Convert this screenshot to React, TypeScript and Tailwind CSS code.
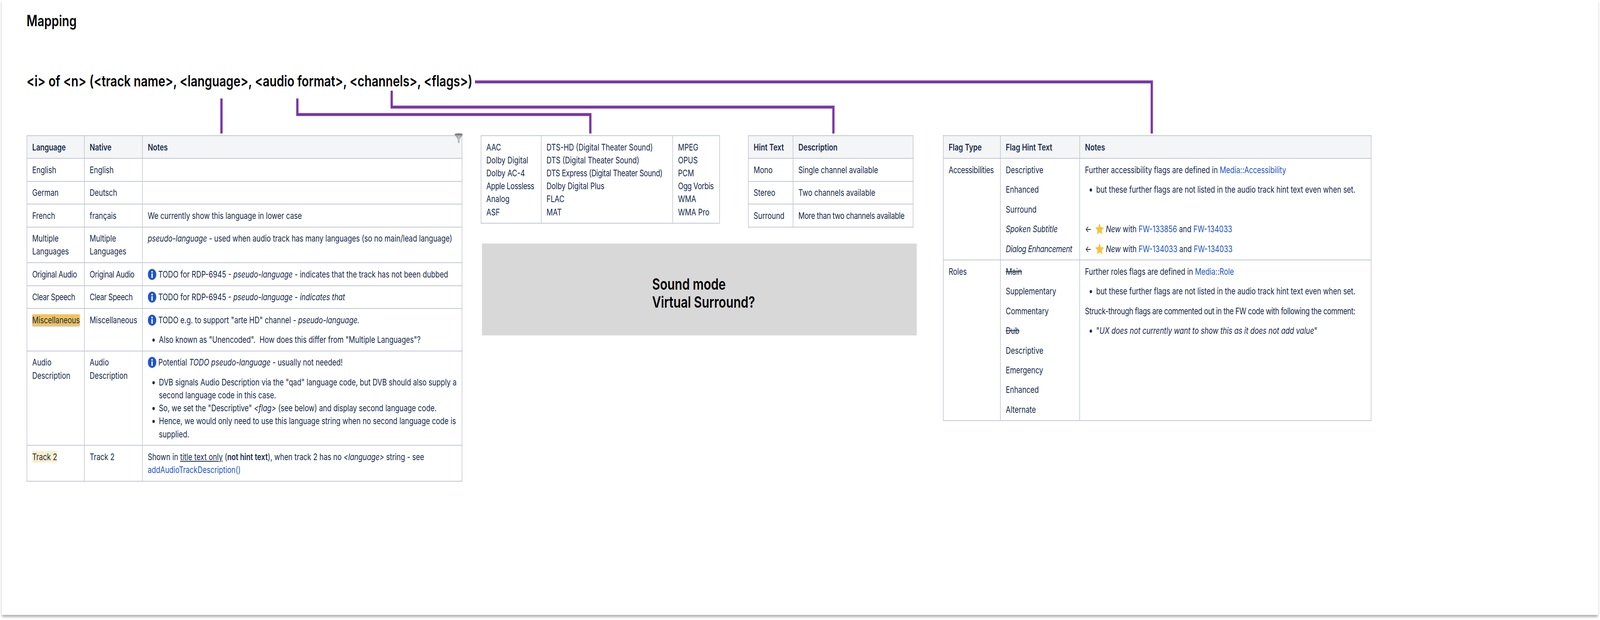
import React from "react";

// The browser window is limited to 4096x1586 (the reference is 5292x1586),
// so the page is built at reference size and compressed horizontally by 4096/5292.
const td = "border-2 border-[#c1c7d0] px-[16.6px] py-[11.6px] align-top text-left font-normal";
const th = "border-2 border-[#c1c7d0] bg-[#f4f5f7] px-[16.6px] py-[11.6px] align-top text-left font-semibold";
const fit = "whitespace-nowrap tracking-[-0.5px]";
const link = "text-[#1f55cc]";

function Info() {
  return (
    <svg viewBox="0 0 28 28" className="inline-block w-[28px] h-[28px] mr-[7px] align-[-6px]">
      <circle cx="14" cy="14" r="14" fill="#1f55cc" />
      <circle cx="14" cy="7.5" r="2.4" fill="#fff" />
      <rect x="11.8" y="11.5" width="4.4" height="11.5" rx="1" fill="#fff" />
    </svg>
  );
}

function Star() {
  return (
    <svg viewBox="0 0 28 28" className="inline-block w-[28px] h-[28px] mx-[6px] align-[-6px]">
      <path
        d="M14 1 L17.9 9.6 L27.2 10.7 L20.3 17 L22.2 26.4 L14 21.7 L5.8 26.4 L7.7 17 L0.8 10.7 L10.1 9.6 Z"
        fill="#f6c23f"
        stroke="#f6c23f"
        strokeWidth="1.2"
        strokeLinejoin="round"
      />
    </svg>
  );
}

function Funnel() {
  return (
    <svg viewBox="0 0 28 26" className="absolute top-[-5px] right-[-2px] w-[28px] h-[26px]">
      <defs>
        <linearGradient id="fg" x1="0" y1="0" x2="1" y2="0">
          <stop offset="0" stopColor="#8f8f8f" />
          <stop offset="0.5" stopColor="#bdbdbd" />
          <stop offset="1" stopColor="#8a8a8a" />
        </linearGradient>
      </defs>
      <path d="M1 4 L27 4 L17 15 L17 24 Q14 26 11 24 L11 15 Z" fill="url(#fg)" />
      <ellipse cx="14" cy="2.6" rx="13.8" ry="2.6" fill="#7d7d7d" />
    </svg>
  );
}

function Bullets({ children }: { children: React.ReactNode }) {
  return <ul className="list-disc pl-[37px] m-0">{children}</ul>;
}

function Connectors() {
  return (
    <svg className="absolute top-0 left-0 pointer-events-none" width="5292" height="1586" fill="none" stroke="#7a37a5" strokeWidth="7.5">
      <path d="M732.5 252 V341.5" />
      <path d="M983.5 252 V293 H1952.5 V341.5" />
      <path d="M1295.5 232 V274 H2756.5 V341.5" />
      <path d="M1571 209.5 H3809.5 V341.5" />
    </svg>
  );
}

export default function App() {
  return (
    <div className="w-[4096px] h-[1586px] overflow-hidden bg-white">
      <div className="relative w-[5292px] h-[1586px] origin-top-left scale-x-[0.774] bg-white text-[#172b4d] text-[23.24px] leading-[33.2px] [font-family:Inter,'Liberation_Sans',sans-serif]">
        <div className="ml-[6px] w-[5280px] h-[1573px] bg-white shadow-[0_5px_7px_rgba(0,0,0,0.33)] pl-[82px] pt-[28px]">
          <h1 className="text-[39px] leading-[50px] font-semibold text-black">Mapping</h1>
          <h2 className="mt-[104px] text-[39px] leading-[50px] font-semibold text-black">
            {"<i> of <n> (<track name>, <language>, <audio format>, <channels>, <flags>)"}
          </h2>

          <div className="mt-[114px] flex items-start">
            <div className="relative w-[1441px]">
              <Funnel />
              <table className="w-[1441px] table-fixed border-collapse">
                <colgroup>
                  <col className="w-[190px]" />
                  <col className="w-[192px]" />
                  <col />
                </colgroup>
                <thead>
                  <tr>
                    <th className={th}>Language</th>
                    <th className={th}>Native</th>
                    <th className={th}>Notes</th>
                  </tr>
                </thead>
                <tbody>
                  <tr>
                    <td className={td}>English</td>
                    <td className={td}>English</td>
                    <td className={td}></td>
                  </tr>
                  <tr>
                    <td className={td}>German</td>
                    <td className={td}>Deutsch</td>
                    <td className={td}></td>
                  </tr>
                  <tr>
                    <td className={td}>French</td>
                    <td className={td}>français</td>
                    <td className={td}>We currently show this language in lower case</td>
                  </tr>
                  <tr>
                    <td className={td}>Multiple Languages</td>
                    <td className={td}>Multiple Languages</td>
                    <td className={td}>
                      <em>pseudo-language</em> - used when audio track has many languages (so no main/lead language)
                    </td>
                  </tr>
                  <tr>
                    <td className={td}><span className={fit}>Original Audio</span></td>
                    <td className={td}><span className={fit}>Original Audio</span></td>
                    <td className={td}>
                      <Info />
                      TODO for RDP-6945 - <em>pseudo-language</em> - indicates that the track has not been dubbed
                    </td>
                  </tr>
                  <tr>
                    <td className={td}><span className={fit}>Clear Speech</span></td>
                    <td className={td}><span className={fit}>Clear Speech</span></td>
                    <td className={td}>
                      <Info />
                      TODO for RDP-6945 - <em>pseudo-language - indicates that</em>
                    </td>
                  </tr>
                  <tr>
                    <td className={td}>
                      <span className="bg-[#efc45a] shadow-[0_2px_4px_rgba(0,0,0,0.3)]">Miscellaneous</span>
                    </td>
                    <td className={td}>Miscellaneous</td>
                    <td className={td}>
                      <p>
                        <Info />
                        TODO e.g. to support "arte HD" channel - <em>pseudo-language.</em>
                      </p>
                      <div className="mt-[17.2px]">
                        <Bullets>
                          <li>Also known as "Unencoded". &nbsp;How does this differ from "Multiple Languages"?</li>
                        </Bullets>
                      </div>
                    </td>
                  </tr>
                  <tr>
                    <td className={td}>Audio Description</td>
                    <td className={td}>Audio Description</td>
                    <td className={td}>
                      <p>
                        <Info />
                        Potential <em>TODO pseudo-language</em> - usually not needed!
                      </p>
                      <div className="mt-[17.2px]">
                        <Bullets>
                          <li>DVB signals Audio Description via the "qad" language code, but DVB should also supply a second language code in this case.</li>
                          <li>So, we set the "Descriptive" <em>{"<flag>"}</em> (see below) and display second language code.</li>
                          <li>Hence, we would only need to use this language string when no second language code is supplied.</li>
                        </Bullets>
                      </div>
                    </td>
                  </tr>
                  <tr>
                    <td className={td}>
                      <span className="bg-[#fbeecb]">Track 2</span>
                    </td>
                    <td className={td}>Track 2</td>
                    <td className={td}>
                      Shown in <span className="underline">title text only</span> (<strong className="font-semibold">not hint text</strong>), when track 2 has no <em>{"<language>"}</em> string - see{" "}
                      <span className={link}>addAudioTrackDescription()</span>
                    </td>
                  </tr>
                </tbody>
              </table>
            </div>

            <div className="ml-[61px] w-[1442px]">
              <div className="flex items-start">
                <table className="w-[791px] table-fixed border-collapse">
                  <colgroup>
                    <col className="w-[199px]" />
                    <col className="w-[435px]" />
                    <col />
                  </colgroup>
                  <tbody>
                    <tr>
                      <td className={td}>
                        AAC<br />Dolby Digital<br />Dolby AC-4<br /><span className={fit}>Apple Lossless</span><br />Analog<br />ASF
                      </td>
                      <td className={td}>
                        DTS-HD (Digital Theater Sound)<br />DTS (Digital Theater Sound)<br /><span className={fit}>DTS Express (Digital Theater Sound)</span><br />Dolby Digital Plus<br />FLAC<br />MAT
                      </td>
                      <td className={td}>
                        MPEG<br />OPUS<br />PCM<br /><span className={fit}>Ogg Vorbis</span><br />WMA<br />WMA Pro
                      </td>
                    </tr>
                  </tbody>
                </table>
                <table className="ml-[93px] w-[547px] table-fixed border-collapse">
                  <colgroup>
                    <col className="w-[148px]" />
                    <col />
                  </colgroup>
                  <thead>
                    <tr>
                      <th className={th}>Hint Text</th>
                      <th className={th}>Description</th>
                    </tr>
                  </thead>
                  <tbody>
                    <tr>
                      <td className={td}>Mono</td>
                      <td className={td}>Single channel available</td>
                    </tr>
                    <tr>
                      <td className={td}>Stereo</td>
                      <td className={td}>Two channels available</td>
                    </tr>
                    <tr>
                      <td className={td}>Surround</td>
                      <td className={td}><span className={fit}>More than two channels available</span></td>
                    </tr>
                  </tbody>
                </table>
              </div>
              <div className="mt-[41px] ml-[4px] w-[1438px] h-[235px] bg-[#d8d8d8] flex items-center pl-[563px] pt-[20px]">
                <p className="text-[40px] leading-[46px] font-semibold text-black">
                  Sound mode<br />Virtual Surround?
                </p>
              </div>
            </div>

            <div className="ml-[87px] w-[1417px]">
              <table className="w-[1417px] table-fixed border-collapse">
                <colgroup>
                  <col className="w-[189px]" />
                  <col className="w-[262px]" />
                  <col />
                </colgroup>
                <thead>
                  <tr>
                    <th className={th}>Flag Type</th>
                    <th className={th}>Flag Hint Text</th>
                    <th className={th}>Notes</th>
                  </tr>
                </thead>
                <tbody>
                  <tr>
                    <td className={td}><span className={fit}>Accessibilities</span></td>
                    <td className={td}>
                      <div className="flex flex-col gap-[17.2px]">
                        <p>Descriptive</p>
                        <p>Enhanced</p>
                        <p>Surround</p>
                        <p><em>Spoken Subtitle</em></p>
                        <p className={fit}><em>Dialog Enhancement</em></p>
                      </div>
                    </td>
                    <td className={td}>
                      <div className="flex flex-col gap-[17.2px]">
                        <p>Further accessibility flags are defined in <span className={link}>Media::Accessibility</span></p>
                        <Bullets>
                          <li>but these further flags are not listed in the audio track hint text even when set.</li>
                        </Bullets>
                        <p>&nbsp;</p>
                        <p>← <Star /><em>New</em> with <span className={link}>FW-133856</span> and <span className={link}>FW-134033</span></p>
                        <p>← <Star /><em>New</em> with <span className={link}>FW-134033</span> and <span className={link}>FW-134033</span></p>
                      </div>
                    </td>
                  </tr>
                  <tr>
                    <td className={td}>Roles</td>
                    <td className={td}>
                      <div className="flex flex-col gap-[17.2px]">
                        <p className="line-through">Main</p>
                        <p>Supplementary</p>
                        <p>Commentary</p>
                        <p className="line-through">Dub</p>
                        <p>Descriptive</p>
                        <p>Emergency</p>
                        <p>Enhanced</p>
                        <p>Alternate</p>
                      </div>
                    </td>
                    <td className={td}>
                      <div className="flex flex-col gap-[17.2px]">
                        <p>Further roles flags are defined in <span className={link}>Media::Role</span></p>
                        <Bullets>
                          <li>but these further flags are not listed in the audio track hint text even when set.</li>
                        </Bullets>
                        <p className={fit}>Struck-through flags are commented out in the FW code with following the comment:</p>
                        <Bullets>
                          <li>"<em>UX does not currently want to show this as it does not add value</em>"</li>
                        </Bullets>
                      </div>
                    </td>
                  </tr>
                </tbody>
              </table>
            </div>
          </div>
        </div>
        <Connectors />
      </div>
    </div>
  );
}
